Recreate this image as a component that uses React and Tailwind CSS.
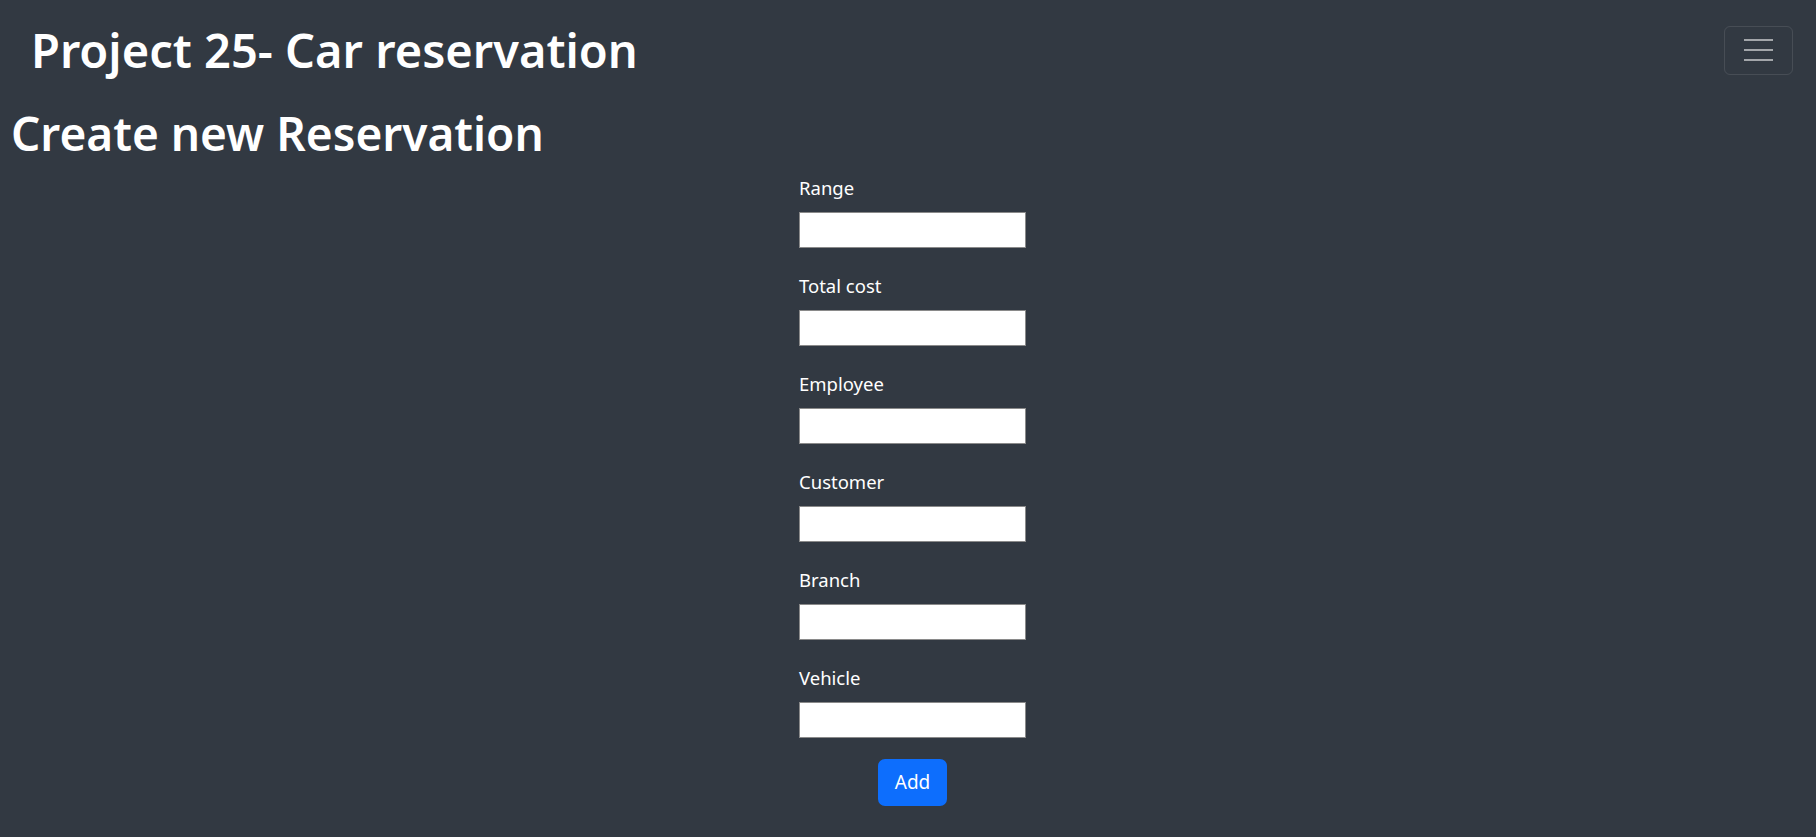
import React from 'react'

const fields = ['Range', 'Total cost', 'Employee', 'Customer', 'Branch', 'Vehicle']

const App = () => {
  return (
    <div className="min-h-[837px] w-full bg-[#323942] text-white font-['Noto_Sans',sans-serif]">
      <nav className="flex items-center justify-between h-[100px] pl-[31px] pr-[23px]">
        <h1 className="text-[47px] leading-[1.2] font-semibold">Project 25- Car reservation</h1>
        <button className="w-[69px] h-[49px] flex flex-col items-center justify-center gap-[8px] rounded-[6px] border border-white/10">
          <span className="block w-[29px] h-[2px] bg-white/55"></span>
          <span className="block w-[29px] h-[2px] bg-white/55"></span>
          <span className="block w-[29px] h-[2px] bg-white/55"></span>
        </button>
      </nav>
      <h2 className="pl-[11px] text-[46px] leading-[1.2] font-semibold mt-[6px]">Create new Reservation</h2>
      <form className="flex flex-col items-center mt-[12px]" onSubmit={e => e.preventDefault()}>
        <div className="w-[227px] ml-[9px]">
          {fields.map(f => (
            <div key={f} className="mb-[23.5px]">
              <label className="block text-[18.5px] leading-[29px] mb-[9.5px]">{f}</label>
              <input type="text" className="block w-[227px] h-[36px] bg-white border border-[#8a8a8a] text-black px-2" />
            </div>
          ))}
        </div>
        <button type="submit" className="ml-[9px] -mt-[2px] w-[69px] h-[47px] rounded-[7px] bg-[#0d6efd] text-[19px] text-white">Add</button>
      </form>
    </div>
  )
}

export default App
